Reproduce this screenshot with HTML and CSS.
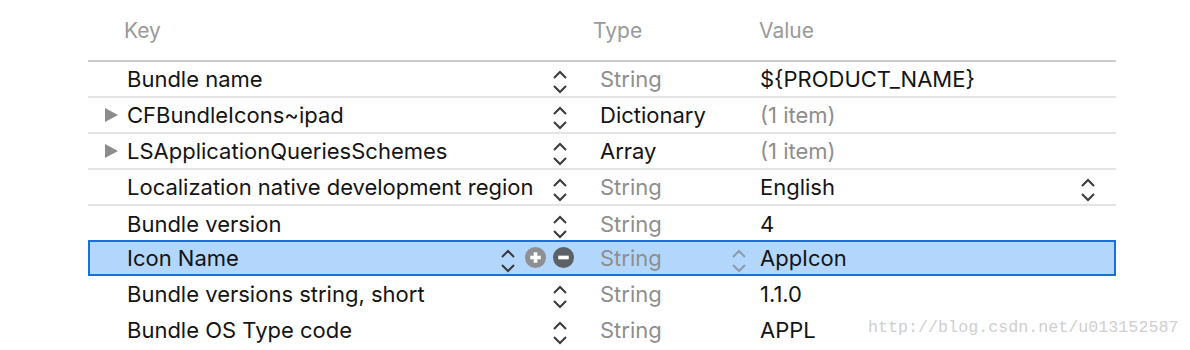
FILE: index.html
```html
<!DOCTYPE html>
<html lang="en">
<head>
  <meta charset="UTF-8" />
  <title>Info.plist</title>
  <link rel="stylesheet" href="styles.css">
</head>
<body>

  <div class="plist">
    <!-- Column titles -->
    <div class="head">
      <div class="col-key">Key</div>
      <div class="col-type">Type</div>
      <div class="col-value">Value</div>
    </div>

    <div class="row lined">
      <div class="arrow"></div>
      <div class="key">Bundle name</div>
      <div class="ctrl"><svg class="stepper" viewBox="0 0 16 24"><path d="M2 8 L8 2 L14 8 M2 16 L8 22 L14 16"/></svg></div>
      <div class="type dim">String</div>
      <div class="value">${PRODUCT_NAME}</div>
    </div>

    <div class="row lined">
      <div class="arrow"><span class="tri"></span></div>
      <div class="key">CFBundleIcons~ipad</div>
      <div class="ctrl"><svg class="stepper" viewBox="0 0 16 24"><path d="M2 8 L8 2 L14 8 M2 16 L8 22 L14 16"/></svg></div>
      <div class="type">Dictionary</div>
      <div class="value dim">(1 item)</div>
    </div>

    <div class="row lined">
      <div class="arrow"><span class="tri"></span></div>
      <div class="key">LSApplicationQueriesSchemes</div>
      <div class="ctrl"><svg class="stepper" viewBox="0 0 16 24"><path d="M2 8 L8 2 L14 8 M2 16 L8 22 L14 16"/></svg></div>
      <div class="type">Array</div>
      <div class="value dim">(1 item)</div>
    </div>

    <div class="row lined">
      <div class="arrow"></div>
      <div class="key">Localization native development region</div>
      <div class="ctrl"><svg class="stepper" viewBox="0 0 16 24"><path d="M2 8 L8 2 L14 8 M2 16 L8 22 L14 16"/></svg></div>
      <div class="type dim">String</div>
      <div class="value">English<svg class="stepper" viewBox="0 0 16 24"><path d="M2 8 L8 2 L14 8 M2 16 L8 22 L14 16"/></svg></div>
    </div>

    <div class="row">
      <div class="arrow"></div>
      <div class="key">Bundle version</div>
      <div class="ctrl"><svg class="stepper" viewBox="0 0 16 24"><path d="M2 8 L8 2 L14 8 M2 16 L8 22 L14 16"/></svg></div>
      <div class="type dim">String</div>
      <div class="value">4</div>
    </div>

    <div class="row selected">
      <div class="arrow"></div>
      <div class="key">Icon Name</div>
      <div class="ctrl">
        <svg class="stepper" viewBox="0 0 16 24"><path d="M2 8 L8 2 L14 8 M2 16 L8 22 L14 16"/></svg>
        <svg class="btn plus" viewBox="0 0 20 20"><circle cx="10" cy="10" r="10"/><path d="M10 5 V15 M5 10 H15"/></svg>
        <svg class="btn minus" viewBox="0 0 20 20"><circle cx="10" cy="10" r="10"/><path d="M5 10 H15"/></svg>
      </div>
      <div class="type dim">String<svg class="stepper faint" viewBox="0 0 16 24"><path d="M2 8 L8 2 L14 8 M2 16 L8 22 L14 16"/></svg></div>
      <div class="value">AppIcon</div>
    </div>

    <div class="row">
      <div class="arrow"></div>
      <div class="key">Bundle versions string, short</div>
      <div class="ctrl"><svg class="stepper" viewBox="0 0 16 24"><path d="M2 8 L8 2 L14 8 M2 16 L8 22 L14 16"/></svg></div>
      <div class="type dim">String</div>
      <div class="value">1.1.0</div>
    </div>

    <div class="row">
      <div class="arrow"></div>
      <div class="key">Bundle OS Type code</div>
      <div class="ctrl"><svg class="stepper" viewBox="0 0 16 24"><path d="M2 8 L8 2 L14 8 M2 16 L8 22 L14 16"/></svg></div>
      <div class="type dim">String</div>
      <div class="value">APPL</div>
    </div>
  </div>

  <div class="watermark">http://blog.csdn.net/u013152587</div>

</body>
</html>
```

FILE: styles.css
```css
body {
  margin: 0;
  padding: 0;
  background: #fff;
  font-family: Inter, "Liberation Sans", sans-serif;
  font-size: 22px;
  color: #141414;
}

.plist {
  width: 1028px;
  margin-left: 88px;
}

.head {
  display: flex;
  align-items: center;
  height: 60px;
  border-bottom: 2px solid #cbcbcb;
  color: #9a9a9a;
  font-size: 21px;
}

.col-key {
  width: 505px;
  padding-left: 36px;
  box-sizing: border-box;
}

.col-type {
  width: 166px;
}

.row {
  display: flex;
  align-items: center;
  height: 36px;
  padding-bottom: 1px;
  box-sizing: border-box;
}

.row.lined {
  border-bottom: 2px solid #e4e4e4;
}

.row.selected {
  margin-top: -2px;
  border: 2px solid #1b6fd8;
  background: #b3d7fc;
}

.arrow {
  width: 39px;
  flex: none;
  display: flex;
  justify-content: flex-end;
  padding-right: 9px;
  box-sizing: border-box;
}

.selected .arrow {
  width: 37px;
}

.tri {
  width: 0;
  height: 0;
  border-top: 7px solid transparent;
  border-bottom: 7px solid transparent;
  border-left: 13px solid #8c8c8c;
}

.key {
  flex: 1;
  min-width: 0;
  white-space: nowrap;
}

.ctrl {
  width: 113px;
  flex: none;
  display: flex;
  align-items: center;
  justify-content: flex-end;
  gap: 7px;
  padding-right: 26px;
  box-sizing: border-box;
}

.stepper {
  width: 16px;
  height: 24px;
  margin-top: 7px;
  fill: none;
  stroke: #3a3a3a;
  stroke-width: 2;
}

.ctrl > .stepper:only-child {
  margin-right: 6px;
}

.ctrl > .stepper + .btn {
  margin-left: 2px;
}

.stepper.faint {
  stroke: #8a9bab;
  margin-right: 13px;
}

.btn {
  width: 21px;
  height: 21px;
}

.btn path {
  stroke: #fff;
  stroke-width: 3.5;
}

.plus circle {
  fill: #8d8f92;
}

.minus circle {
  fill: #5c6168;
}

.type {
  width: 160px;
  flex: none;
  display: flex;
  align-items: center;
  justify-content: space-between;
}

.value {
  width: 356px;
  flex: none;
  display: flex;
  align-items: center;
  justify-content: space-between;
  padding-right: 20px;
  box-sizing: border-box;
}

.selected .value {
  width: 354px;
}

.dim {
  color: #8e8e8e;
}

.watermark {
  position: absolute;
  left: 868px;
  top: 318px;
  font-family: "Liberation Mono", monospace;
  font-size: 16.7px;
  color: #cfcfcf;
}
```
